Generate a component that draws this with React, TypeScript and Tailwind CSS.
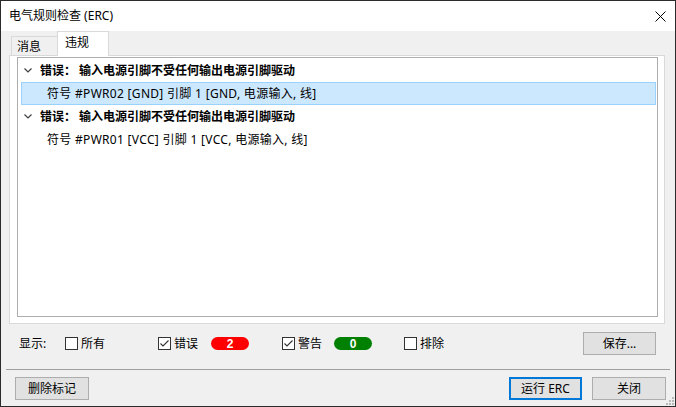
import type { ReactNode } from 'react'

const font = { fontFamily: '"Noto Sans", "Noto Sans CJK SC", sans-serif' }

function Chevron() {
  return (
    <svg width="8" height="5" viewBox="0 0 8 5" className="shrink-0">
      <path d="M0.5 0.5 L4 4 L7.5 0.5" fill="none" stroke="#404040" strokeWidth="1.2" />
    </svg>
  )
}

function Checkbox({ checked, label }: { checked?: boolean; label: string }) {
  return (
    <div className="flex items-center">
      <div className="w-[13px] h-[13px] border border-[#333] bg-white flex items-center justify-center">
        {checked && (
          <svg width="11" height="11" viewBox="0 0 11 11">
            <path d="M1.5 5.5 L4 8 L9.5 2.5" fill="none" stroke="#333" strokeWidth="1.1" />
          </svg>
        )}
      </div>
      <span className="ml-[3px] text-[12px] leading-[16px]">{label}</span>
    </div>
  )
}

function Badge({ value, color }: { value: number; color: string }) {
  return (
    <div
      className={`${color} h-[13px] w-[38px] rounded-full flex items-center justify-center text-white text-[12px] font-bold leading-none`}
      style={{ fontFamily: '"Liberation Sans", sans-serif' }}
    >
      {value}
    </div>
  )
}

function Button({ children, primary, className }: { children: ReactNode; primary?: boolean; className?: string }) {
  return (
    <div
      className={`h-[23px] bg-[#e1e1e1] flex items-center justify-center text-[12px] leading-none ${
        primary ? 'border-2 border-[#0078d7]' : 'border border-[#adadad]'
      } ${className ?? ''}`}
    >
      {children}
    </div>
  )
}

function Row({ children, selected, child }: { children: ReactNode; selected?: boolean; child?: boolean }) {
  return (
    <div
      className={`h-[23px] ml-[3px] mr-[1px] border flex items-center ${
        selected ? 'bg-[#cce8ff] border-[#99d1ff]' : 'border-transparent'
      } ${child ? 'pl-[25px] tracking-[0.3px]' : 'pl-[2px]'}`}
    >
      {children}
    </div>
  )
}

export default function App() {
  return (
    <div
      className="w-[676px] h-[407px] border border-[#2b2b2b] bg-[#f0f0f0] flex flex-col text-black relative"
      style={font}
    >
      <div className="h-[30px] bg-white flex items-center justify-between pl-[8px] pr-[9px]">
        <span className="text-[12px] leading-none">电气规则检查 (ERC)</span>
        <svg width="11" height="11" viewBox="0 0 11 11">
          <path d="M0.5 0.5 L10.5 10.5 M10.5 0.5 L0.5 10.5" stroke="#000" strokeWidth="1" />
        </svg>
      </div>

      <div className="h-[24px] flex items-end pl-[10px]">
        <div className="h-[19px] w-[46px] border-l border-t border-[#d9d9d9] flex items-center pl-[5px] text-[12px] leading-none pt-[1px]">
          消息
        </div>
        <div className="relative z-10 -mb-px h-[25px] w-[52px] bg-white border-l border-t border-r border-[#d9d9d9] flex items-center pl-[7px] text-[12px] leading-none pb-[2px]">
          违规
        </div>
      </div>

      <div className="ml-[8px] w-[656px] h-[269px] border border-[#d9d9d9] bg-white pl-[7px] pt-[1px]">
        <div className="w-[641px] h-[260px] border border-[#adadad] bg-white pt-[1px] text-[12px] leading-none">
          <Row>
            <Chevron />
            <span className="ml-[8px] font-bold">错误： 输入电源引脚不受任何输出电源引脚驱动</span>
          </Row>
          <Row selected child>
            符号 #PWR02 [GND] 引脚 1 [GND, 电源输入, 线]
          </Row>
          <Row>
            <Chevron />
            <span className="ml-[8px] font-bold">错误： 输入电源引脚不受任何输出电源引脚驱动</span>
          </Row>
          <Row child>符号 #PWR01 [VCC] 引脚 1 [VCC, 电源输入, 线]</Row>
        </div>
      </div>

      <div className="mt-[8px] h-[23px] flex items-center">
        <span className="ml-[18px] w-[46px] text-[12px] leading-none">显示:</span>
        <div className="w-[93px]">
          <Checkbox label="所有" />
        </div>
        <div className="w-[53px]">
          <Checkbox checked label="错误" />
        </div>
        <div className="w-[71px]">
          <Badge value={2} color="bg-[#ff0000]" />
        </div>
        <div className="w-[52px]">
          <Checkbox checked label="警告" />
        </div>
        <div className="w-[70px]">
          <Badge value={0} color="bg-[#008000]" />
        </div>
        <div>
          <Checkbox label="排除" />
        </div>
        <Button className="ml-auto mr-[19px] w-[73px]">保存...</Button>
      </div>

      <div className="mt-[14px] mx-[5px] border-t border-[#a0a0a0]" />

      <div className="mt-[7px] h-[23px] flex items-center">
        <Button className="ml-[14px] w-[74px]">删除标记</Button>
        <Button primary className="ml-auto w-[73px]">运行 ERC</Button>
        <Button className="ml-[10px] mr-[9px] w-[74px]">关闭</Button>
      </div>

      <svg width="9" height="9" viewBox="0 0 9 9" className="absolute right-[1px] bottom-[1px]">
        <rect x="7" y="1" width="2" height="2" fill="#b8b8b8" />
        <rect x="4" y="4" width="2" height="2" fill="#b8b8b8" />
        <rect x="7" y="4" width="2" height="2" fill="#b8b8b8" />
        <rect x="1" y="7" width="2" height="2" fill="#b8b8b8" />
        <rect x="4" y="7" width="2" height="2" fill="#b8b8b8" />
        <rect x="7" y="7" width="2" height="2" fill="#b8b8b8" />
      </svg>
    </div>
  )
}
